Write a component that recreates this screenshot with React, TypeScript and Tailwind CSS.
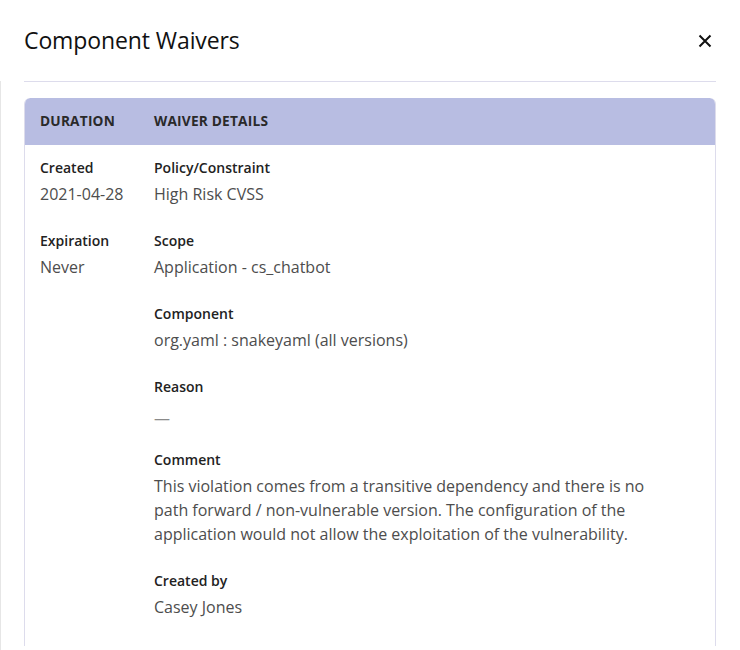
import React from 'react';

const rows = [
  { label: 'Policy/Constraint', value: 'High Risk CVSS' },
  { label: 'Scope', value: 'Application - cs_chatbot' },
  { label: 'Component', value: 'org.yaml : snakeyaml (all versions)' },
  { label: 'Reason', value: null },
  {
    label: 'Comment',
    value:
      'This violation comes from a transitive dependency and there is no path forward / non-vulnerable version. The configuration of the application would not allow the exploitation of the vulnerability.',
  },
  { label: 'Created by', value: 'Casey Jones' },
];

const Field = ({ label, value }: { label: string; value: string | null }) => (
  <div className="mb-[25px]">
    <div className="text-[14px] leading-5 font-semibold text-[#222]">{label}</div>
    {value ? (
      <div className="mt-[4px] text-[16px] leading-6 text-[#4d4d4d]">{value}</div>
    ) : (
      <div className="mt-[4px] text-[16px] leading-6 text-[#8a8a8a]">
        <span className="inline-block translate-y-[5px]">—</span>
      </div>
    )}
  </div>
);

const App = () => {
  return (
    <div className="w-[740px] h-[650px] bg-white overflow-hidden" style={{ fontFamily: '"Open Sans", sans-serif' }}>
      <div className="flex items-center justify-between px-6 h-[81px]">
        <h1 className="text-[23px] font-medium text-[#111] tracking-[-0.1px]">Component Waivers</h1>
        <button className="text-[#111] mr-[4px]">
          <svg width="14" height="14" viewBox="0 0 14 14" fill="none" stroke="currentColor" strokeWidth="2">
            <path d="M1.5 1.5l11 11M12.5 1.5l-11 11" />
          </svg>
        </button>
      </div>
      <div className="flex">
        <div className="w-[1px] bg-[#e6e6e6] h-[570px]" />
        <div className="flex-1 pl-[23px] pr-6">
          <div className="border-t border-[#dddcec] pt-4">
            <div className="rounded-t-md border-x border-[#dddcec] h-[548px] overflow-hidden">
              <div className="bg-[#b8bde2] h-[47px] flex items-center text-[13.7px] font-bold text-[#2a2a2a] tracking-[0.2px] -mx-px rounded-t-md">
                <div className="w-[130px] pl-4">DURATION</div>
                <div>WAIVER DETAILS</div>
              </div>
              <div className="flex pt-[13px]">
                <div className="w-[129px] pl-[15px]">
                  <Field label="Created" value="2021-04-28" />
                  <Field label="Expiration" value="Never" />
                </div>
                <div className="w-[500px] h-[520px]">
                  {rows.map(r => (
                    <Field key={r.label} label={r.label} value={r.value} />
                  ))}
                </div>
              </div>
            </div>
          </div>
        </div>
      </div>
    </div>
  );
};

export default App;
